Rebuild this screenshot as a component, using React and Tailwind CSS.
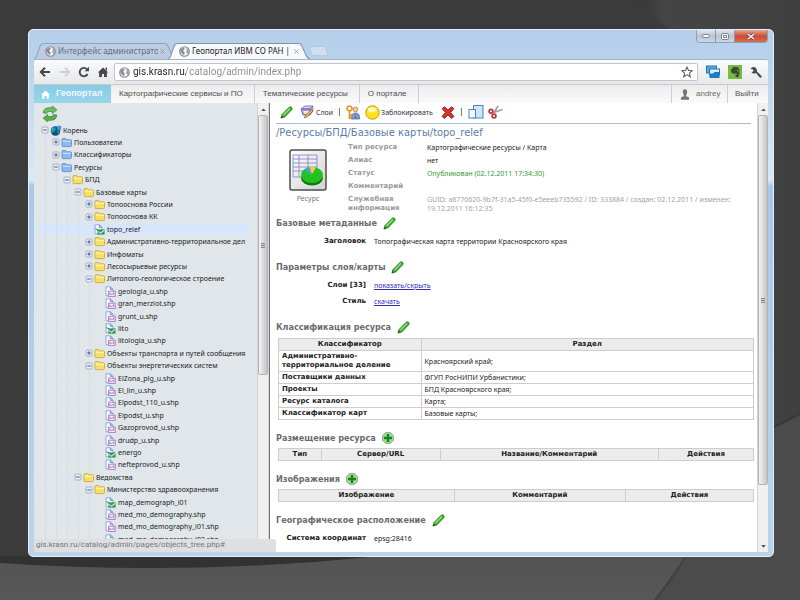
import React from "react";

const tree = [
  [0, "Корень", "globe", "-"],
  [1, "Пользователи", "blue", "+"],
  [1, "Классификаторы", "blue", "+"],
  [1, "Ресурсы", "blue", "-"],
  [2, "БПД", "yellow", "-"],
  [3, "Базовые карты", "yellow", "-"],
  [4, "Топооснова России", "yellow", "+"],
  [4, "Топооснова КК", "yellow", "+"],
  [4, "topo_relef", "map", ""],
  [4, "Административно-территориальное дел", "yellow", "+"],
  [4, "Инфоматы", "yellow", "+"],
  [4, "Лесосырьевые ресурсы", "yellow", "+"],
  [4, "Литолого-геологическое строение", "yellow", "-"],
  [5, "geologia_u.shp", "shp", ""],
  [5, "gran_merzlot.shp", "shp", ""],
  [5, "grunt_u.shp", "shp", ""],
  [5, "lito", "map", ""],
  [5, "litologia_u.shp", "shp", ""],
  [4, "Объекты транспорта и путей сообщения", "yellow", "+"],
  [4, "Объекты энергетических систем", "yellow", "-"],
  [5, "ElZona_plg_u.shp", "shp", ""],
  [5, "El_lin_u.shp", "shp", ""],
  [5, "Elpodst_110_u.shp", "shp", ""],
  [5, "Elpodst_u.shp", "shp", ""],
  [5, "Gazoprovod_u.shp", "shp", ""],
  [5, "drudp_u.shp", "shp", ""],
  [5, "energo", "map", ""],
  [5, "nefteprovod_u.shp", "shp", ""],
  [3, "Ведомства", "yellow", "-"],
  [4, "Министерство здравоохранения", "yellow", "-"],
  [5, "map_demograph_i01", "map", ""],
  [5, "med_mo_demography.shp", "shp", ""],
  [5, "med_mo_demography_i01.shp", "shp", ""],
  [5, "med_mo_demography_i02.shp", "shp", ""],
];

function Backdrop() {
  return (
    <svg className="absolute inset-0 h-full w-full" viewBox="0 0 800 600" preserveAspectRatio="none" aria-hidden="true">
      <defs>
        <linearGradient id="floor" x1="0" y1="0" x2="0" y2="1">
          <stop offset="0" stopColor="#474747" />
          <stop offset="1" stopColor="#575757" />
        </linearGradient>
        <linearGradient id="side" x1="0" y1="0" x2="1" y2="0">
          <stop offset="0" stopColor="#363636" />
          <stop offset="0.16" stopColor="#444444" />
          <stop offset="1" stopColor="#404040" />
        </linearGradient>
      </defs>
      <rect width="800" height="600" fill="#3b3b3b" />
      <path d="M638 0H800V440H774V60Q690 60 638 0Z" fill="url(#side)" />
      <path d="M0 562Q190 575 380 556L774 428L800 414V600H0Z" fill="url(#floor)" />
      <path d="M0 556H380Q190 576 0 563Z" fill="#323232" />
      <path d="M774 428L800 414V600H655Q676 573 686 556H774Z" fill="#4b4b4b" />
      <path d="M655 600Q676 573 686 556" stroke="#404040" strokeWidth="2" fill="none" />
      <path d="M774 427L800 414" stroke="#383838" strokeWidth="2" />
    </svg>
  );
}

function Pencil() {
  return (
    <svg viewBox="0 0 14 14" className="h-[13px] w-[13px]" aria-hidden="true">
      <path d="M1 13L2.200 9.200L9.800 1.400Q11.200 .4 12.600 1.500Q13.600 2.800 12.600 4.100L5 11.900Z" fill="#3fae2e" stroke="#1f7a1b" strokeWidth=".9" />
      <path d="M3.600 9.800L10.800 2.600" stroke="#a5e58c" strokeWidth="1.400" />
      <path d="M1 13L1.900 10.600L3.400 12.100Z" fill="#2c4a20" />
    </svg>
  );
}

function Plus() {
  return (
    <svg viewBox="0 0 12 12" className="h-3 w-3" aria-hidden="true">
      <path d="M3.600 .6H8.400L11.400 3.600V8.400L8.400 11.400H3.600L.6 8.400V3.600Z" fill="#a9d3a6" stroke="#6fa86c" strokeWidth=".8" />
      <path d="M6 2V10M2 6H10" stroke="#0c8a14" strokeWidth="2.400" />
    </svg>
  );
}

function Globe() {
  return (
    <svg viewBox="0 0 12 12" className="h-[11px] w-[11px] shrink-0" aria-hidden="true">
      <circle cx="6" cy="6" r="5.200" fill="#f4f5f6" stroke="#84888e" strokeWidth="1.300" />
      <path d="M1.600 3.600L4.600 1.800L6.400 3L4.400 5L6.200 7.200L5.400 10L3 8L1.200 5.400Z" fill="#8a8e94" />
      <path d="M8 1.800L10.200 3.800L10.600 6.600L9 8.600L7.800 6.200L8.600 4.400Z" fill="#9a9ea3" />
    </svg>
  );
}

function TreeIcon({ kind }) {
  if (kind === "globe")
    return (
      <svg viewBox="0 0 12 11" className="h-[11px] w-3" aria-hidden="true">
        <circle cx="5.500" cy="6" r="4.800" fill="#0d4f9a" />
        <path d="M2 3Q5 1.500 5.500 3.500T3.500 7T2 8.500Q0 5.500 2 3Z" fill="#27a39a" />
        <path d="M6.500 5.500L9.500 5Q10 8 7.600 9.600Z" fill="#1d8f6a" />
        <circle cx="9.200" cy="2.800" r="2.300" fill="#3b9ede" />
      </svg>
    );
  if (kind === "blue" || kind === "yellow") {
    const blue = kind === "blue";
    return (
      <svg viewBox="0 0 12 11" className="h-[11px] w-3" aria-hidden="true">
        <path
          d="M1 2.500Q1 1.500 2 1.500H4.600L5.800 2.800H9.500Q10.500 2.800 10.500 3.800V8.600Q10.500 9.600 9.500 9.600H2Q1 9.600 1 8.600Z"
          fill={blue ? "#8db9ee" : "#f8df62"}
          stroke={blue ? "#5f8fd0" : "#cfaa3c"}
          strokeWidth=".9"
        />
        <path d="M1.800 4.400H9.800" stroke={blue ? "#c6defa" : "#fff4ac"} strokeWidth="1.400" />
      </svg>
    );
  }
  const map = kind === "map";
  return (
    <svg viewBox="0 0 12 11" className="h-[11px] w-3" aria-hidden="true">
      <path d="M1 .8H5.500L8 3.200V9.800H1Z" fill="#f4f8ff" stroke="#7d9ccb" strokeWidth=".8" />
      <path d="M5.300 .8V3.500H8" fill="#8fb0df" stroke="#6c8fc4" strokeWidth=".7" />
      {map ? (
        <g>
          <rect x="3.400" y="5.400" width="7.200" height="5.200" fill="#2e9a4e" />
          <path d="M3.600 6L6 8.500L10.400 5.400V7L6.500 10L3.600 8Z" fill="#b4e4ca" />
          <path d="M1.500 4.500L4.500 6.500" stroke="#335a8a" strokeWidth="1" />
        </g>
      ) : (
        <g>
          <rect x="3.600" y="5.200" width="6.600" height="5.200" fill="#f6ecfa" stroke="#a878be" strokeWidth=".9" />
          <path d="M4.800 9V7L6.800 8.800L8.800 6.600V9" stroke="#a878be" strokeWidth=".9" fill="none" />
        </g>
      )}
    </svg>
  );
}

function Toggle({ state }) {
  if (!state) return <span className="w-[9px] shrink-0" />;
  return (
    <button className="flex w-[9px] shrink-0 items-center" aria-label={state === "+" ? "Развернуть" : "Свернуть"}>
      <svg viewBox="0 0 8 8" className="h-2 w-2" aria-hidden="true">
        <rect x="1" y="1" width="6" height="6" rx="1" fill="#eef2f7" stroke="#98a9c1" strokeWidth=".9" />
        <path d={state === "+" ? "M2.200 4H5.800M4 2.200V5.800" : "M2.200 4H5.800"} stroke="#3f5884" strokeWidth="1" />
      </svg>
    </button>
  );
}

function Scrollbar({ thumb, bottomArrow }) {
  return (
    <div className="flex w-[11px] shrink-0 flex-col border-l border-[#d4d4d4] bg-[#f0f0f0]" aria-hidden="true">
      <div className="flex h-3 shrink-0 items-center justify-center">
        <svg viewBox="0 0 6 4" className="h-[3px] w-[5px]"><path d="M0 4L3 .5L6 4Z" fill="#505050" /></svg>
      </div>
      <div className={"flex items-center justify-center rounded-xs border border-[#b4b4b8] bg-linear-to-r from-[#f4f4f5] to-[#c4c4c8] " + thumb}>
        <div className="h-[5px] w-1 border-y border-[#888] bg-[linear-gradient(#ccc_1px,#888_1px,#888_2px,#ccc_2px)]" />
      </div>
      <div className="flex-1" />
      {bottomArrow && (
        <div className="flex h-3 shrink-0 items-center justify-center">
          <svg viewBox="0 0 6 4" className="h-[3px] w-[5px]"><path d="M0 0L3 3.500L6 0Z" fill="#505050" /></svg>
        </div>
      )}
    </div>
  );
}

function WindowButtons() {
  return (
    <div className="flex h-[13px] overflow-hidden rounded-b border border-t-0 border-[#8fa0b6]">
      <button aria-label="Свернуть" className="flex w-[19px] items-center justify-center border-r border-[#8699b2] bg-linear-to-b from-[#dfe6ef] via-[#b9c5d3] to-[#cdd8e4]">
        <span className="h-1 w-2 rounded-xs border border-[#7c8693] bg-white" />
      </button>
      <button aria-label="Развернуть" className="flex w-[19px] items-center justify-center border-r border-[#8699b2] bg-linear-to-b from-[#dfe6ef] via-[#b9c5d3] to-[#cdd8e4]">
        <span className="flex h-[7px] w-2 items-center justify-center rounded-xs border border-[#7c8693] bg-white"><span className="h-[3px] w-1 border border-[#7c8693]" /></span>
      </button>
      <button aria-label="Закрыть" className="flex w-8 items-center justify-center bg-linear-to-b from-[#e5a797] via-[#cb4b33] to-[#d9694e]">
        <svg viewBox="0 0 8 7" className="h-[7px] w-2"><path d="M1 1L7 6M7 1L1 6" stroke="#7a4a4a" strokeWidth="3" /><path d="M1 1L7 6M7 1L1 6" stroke="#f4f4f4" strokeWidth="1.600" /></svg>
      </button>
    </div>
  );
}

function Tab({ active, title }) {
  return (
    <div className={"relative flex h-4 w-[142px] items-center pl-[11px] " + (active ? "z-10 -ml-2" : "")}>
      <svg viewBox="0 0 140 16" preserveAspectRatio="none" className="absolute inset-0 h-full w-full" aria-hidden="true">
        <path
          d="M0 16Q2 15 3 12L6 3Q7 .5 10 .5H128Q131 .5 132 3L136 12Q137 15 140 16"
          fill={active ? "#f8f9fb" : "#bccde2"}
          stroke={active ? "#7f93ad" : "#8fa3bd"}
          strokeWidth="1"
        />
      </svg>
      <button className="relative flex min-w-0 flex-1 items-center gap-0.5">
        <Globe />
        <span className={"flex-1 overflow-hidden text-left text-[8px] leading-3 whitespace-nowrap " + (active ? "text-[#222]" : "text-[#66717f]")}>{title}</span>
      </button>
      <button aria-label="Закрыть вкладку" className="relative mr-2.5 flex w-2 justify-center">
        <svg viewBox="0 0 6 6" className="h-[5px] w-[5px]"><path d="M.5 .5L5.500 5.500M5.500 .5L.5 5.500" stroke="#9299a3" strokeWidth="1.100" /></svg>
      </button>
    </div>
  );
}

function BrowserBar() {
  return (
    <div className="flex h-[25px] shrink-0 items-center rounded-t-xs border-t border-[#a4b4c8] bg-linear-to-b from-[#fbfbfc] to-[#e6e7e9] pr-1.5 pl-[5px]">
      <button aria-label="Назад" className="w-5"><svg viewBox="0 0 12 12" className="h-3 w-3"><path d="M11 6H2M6 1.800L1.800 6L6 10.200" stroke="#484848" strokeWidth="2" fill="none" /></svg></button>
      <button aria-label="Вперёд" className="w-[19px]"><svg viewBox="0 0 12 12" className="h-3 w-3"><path d="M1 6H10M6 1.800L10.200 6L6 10.200" stroke="#cfcfcf" strokeWidth="1.800" fill="none" /></svg></button>
      <button aria-label="Обновить" className="w-[19px]"><svg viewBox="0 0 12 12" className="h-3 w-3"><path d="M9.600 8A4.200 4.200 0 1 1 9 3.200" stroke="#484848" strokeWidth="1.900" fill="none" /><path d="M6.500 5.200H11V.8Z" fill="#484848" /></svg></button>
      <button aria-label="Домой" className="w-[17px]"><svg viewBox="0 0 12 12" className="h-3 w-3"><path d="M.8 6.400L6 1.400L11.200 6.400H9.900V11H7V8H5V11H2.100V6.400Z" fill="#484848" /><path d="M8.600 1.400H10V4.500H8.600Z" fill="#484848" /></svg></button>
      <div className="flex h-[18px] min-w-0 flex-1 items-center gap-[3px] rounded-xs border border-[#c2c6cc] bg-white px-1">
        <Globe />
        <input
          aria-label="Адрес"
          defaultValue="gis.krasn.ru/catalog/admin/index.php"
          className="min-w-0 flex-1 bg-[linear-gradient(90deg,#222_53px,#8b8b8b_53px)] bg-clip-text font-['Roboto',sans-serif] text-[10px] leading-4 text-transparent outline-none"
        />
        <button aria-label="Закладка"><svg viewBox="0 0 12 12" className="h-3 w-3"><path d="M6 1L7.500 4.400L11.200 4.700L8.400 7.100L9.300 10.800L6 8.800L2.700 10.800L3.600 7.100L.8 4.700L4.500 4.400Z" fill="#fff" stroke="#5c6370" strokeWidth="1.100" /></svg></button>
      </div>
      <button aria-label="Вкладки" className="ml-2 w-[22px]">
        <svg viewBox="0 0 14 14" className="h-[14px] w-[14px]"><rect x=".5" y="1" width="10" height="7" fill="#5ba6da" stroke="#2577b4" /><rect x="3.500" y="4" width="10" height="6" fill="#d8ecf8" stroke="#2577b4" /><path d="M3.500 13V8.500H7L8.500 7H13.500V13Z" fill="#1f7dbd" /></svg>
      </button>
      <button aria-label="Заметки" className="w-[22px]">
        <svg viewBox="0 0 14 14" className="h-[14px] w-[14px]"><rect width="14" height="14" fill="#75bb3e" /><path d="M3 4.500L5.500 2H9Q11.500 2.500 11.500 6Q11.500 12 9.500 12.200Q7 12.400 7.200 10.400Q7.800 9.200 9 10Q9.200 8.600 7.400 8.600Q5.600 9.400 4 8Q2.600 6.800 3 4.500Z" fill="#3d4a38" /><path d="M9 5.400Q10 5 10.200 6.400" stroke="#a7d486" strokeWidth=".9" fill="none" /></svg>
      </button>
      <button aria-label="Настройки">
        <svg viewBox="0 0 12 12" className="h-3 w-3"><path d="M4.500 1Q1.500 .6 .6 3L3 3.400L3.600 5.200L1.400 6.200Q3.600 8.200 6 6.900L9.400 11.200Q10.800 12.200 11.600 11Q12 10 10.800 9.200L6.900 5.600Q7.500 2.400 4.500 1Z" fill="#4a4a4a" /></svg>
      </button>
    </div>
  );
}

function NavBar() {
  const link = "flex items-center border-r border-[#cfcfd1] pr-[11px] pl-2 text-[#4c4c4c]";
  return (
    <nav className="flex h-[19px] shrink-0 border-t border-[#c8cacd] bg-linear-to-b from-[#ececee] to-[#fafafa] font-['Liberation_Sans',sans-serif] text-[8px]">
      <a href="#home" className="flex w-[77px] items-center gap-1.5 bg-linear-to-b from-[#86cbe4] to-[#9ad6ea] pl-[7px] text-[9px] font-bold text-[#effaff]">
        <svg viewBox="0 0 10 10" className="h-[9px] w-[9px]" aria-hidden="true"><path d="M0 5.400L5 .5L10 5.400H8.700V9.600H6.200V6.600H3.800V9.600H1.300V5.400Z" fill="#fff" /></svg>
        Геопортал
      </a>
      <a href="#services" className={link}>Картографические сервисы и ПО</a>
      <a href="#thematic" className={link}>Тематические ресурсы</a>
      <a href="#about" className={link}>О портале</a>
      <span className="flex-1" />
      <a href="#user" className="flex w-[57px] items-center gap-1.5 border-x border-[#cfcfd1] pl-2 text-[#6a6a6a]">
        <svg viewBox="0 0 10 11" className="h-[11px] w-2.5" aria-hidden="true"><path d="M5 .3Q7.400 .3 7.200 3Q7 5.200 6.200 6V7.200L9 8.200V10.700H1V8.200L3.800 7.200V6Q3 5.200 2.800 3Q2.600 .3 5 .3Z" fill="#777" /></svg>
        andrey
      </a>
      <a href="#exit" className="flex w-10 items-center pl-[7px] text-[#555]">Выйти</a>
    </nav>
  );
}

function Sidebar() {
  return (
    <aside className="relative flex w-[223px] shrink-0 flex-col overflow-hidden bg-[#e0e6ea] font-['Noto_Sans',sans-serif] text-[7px] text-[#222]">
      <button aria-label="Обновить дерево" className="ml-2 h-[21px] w-4 shrink-0">
        <svg viewBox="0 0 14 14" className="h-4 w-4">
          <path d="M1 6Q1.500 1.500 6.500 1.500H9V0L13 3.400L9 6.600V4.800H6.500Q4.500 4.800 4 6.500Z" fill="#6fbf62" stroke="#3d8c3a" strokeWidth=".7" />
          <path d="M13 8Q12.500 12.500 7.500 12.500H5V14L1 10.600L5 7.400V9.200H7.500Q9.500 9.200 10 7.500Z" fill="#58ad50" stroke="#3d8c3a" strokeWidth=".7" />
        </svg>
      </button>
      <ul className="mr-[7px] ml-1 shrink-0">
        {tree.map(([depth, name, kind, state], i) => (
          <li
            key={i}
            className={"flex h-3 items-center pl-[3px] nth-[5n]:h-[13px] nth-[5n+3]:h-[13px] " + (name === "topo_relef" ? "bg-[#d8e6fb]" : "")}
          >
            {Array.from({ length: depth }, (_, d) => (
              <span key={d} className="flex w-[11px] shrink-0 self-stretch pl-1"><span className="border-l border-dotted border-[#cfd6dc]" /></span>
            ))}
            <Toggle state={state} />
            <span className="w-3 shrink-0"><TreeIcon kind={kind} /></span>
            <a href="#node" className="pl-px leading-[11px] whitespace-nowrap">{name}</a>
          </li>
        ))}
      </ul>
    </aside>
  );
}

function Toolbar() {
  return (
    <div className="mr-1.5 flex h-[21px] items-center border-b border-[#a9bccf] pr-1 pb-0.5 pl-1 text-[7px] text-[#333]">
      <button aria-label="Править" className="mr-[7px]"><Pencil /></button>
      <button className="flex items-center gap-0.5">
        <svg viewBox="0 0 14 14" className="h-[14px] w-[14px]" aria-hidden="true">
          <path d="M1 4L5 1H13L10 4Z" fill="#d9cdf2" stroke="#6b5aa8" strokeWidth=".8" />
          <path d="M10 4L13 1V6L10 10Z" fill="#b7a8e0" stroke="#6b5aa8" strokeWidth=".6" />
          <path d="M1 4H10V10H3Z" fill="#a99ad8" stroke="#6b5aa8" strokeWidth=".8" />
          <path d="M3 6H9V9H5Z" fill="#efe8fb" />
          <path d="M4.500 13L5.500 10L11.500 4.500L13 6L7 11.800Z" fill="#f0b23e" stroke="#8a5c1c" strokeWidth=".7" />
        </svg>
        Слои
      </button>
      <span className="mx-1.5 h-2 w-px bg-[#6a8f6a]" />
      <button aria-label="Права доступа" className="mr-[5px]">
        <svg viewBox="0 0 14 15" className="h-[15px] w-[14px]">
          <circle cx="9.500" cy="4.500" r="2.400" fill="#f0c9a0" stroke="#9a6a3a" strokeWidth=".6" />
          <path d="M5 14Q5 8 9.500 8T13.500 14Z" fill="#6fa0dc" stroke="#335f9a" strokeWidth=".7" />
          <path d="M9.500 8.500L10.500 13H8.500Z" fill="#d44" />
          <circle cx="3.500" cy="3.500" r="2.500" fill="none" stroke="#dd9a1c" strokeWidth="1.700" />
          <path d="M3.500 6V14M3.500 10H6M3.500 12.800H6" stroke="#dd9a1c" strokeWidth="1.700" />
        </svg>
      </button>
      <button className="flex items-center gap-px">
        <svg viewBox="0 0 14 14" className="h-[15px] w-[15px]" aria-hidden="true">
          <circle cx="7" cy="7" r="6.300" fill="#ffe21c" stroke="#c09a10" strokeWidth=".9" />
          <ellipse cx="6.500" cy="4.400" rx="3.800" ry="2.400" fill="#fff9b8" />
        </svg>
        Заблокировать
      </button>
      <button aria-label="Удалить" className="ml-2">
        <svg viewBox="0 0 14 13" className="h-[13px] w-[14px]"><path d="M1 2.600L3.600 .8L7 4L10.400 .8L13 2.600L9.600 6.400L13 10.400L10.400 12.400L7 9L3.600 12.400L1 10.400L4.400 6.400Z" fill="#d3332c" stroke="#8e1a18" strokeWidth=".8" /></svg>
      </button>
      <span className="mx-1.5 h-2 w-px bg-[#6a8f6a]" />
      <button aria-label="Копировать" className="mr-1">
        <svg viewBox="0 0 16 14" className="h-[14px] w-4"><rect x="5.500" y=".5" width="9.500" height="12.500" fill="#cfe6fa" stroke="#4a86c0" /><rect x="1" y="4.500" width="6.500" height="8.500" fill="#f4faff" stroke="#4a86c0" /></svg>
      </button>
      <button aria-label="Вырезать">
        <svg viewBox="0 0 15 14" className="h-[14px] w-[15px]"><path d="M6 8L10 .8M6 7.500L14.500 4.600" stroke="#9a9da3" strokeWidth="1.600" /><circle cx="3" cy="6.200" r="1.900" fill="none" stroke="#c0343a" strokeWidth="1.700" /><circle cx="6" cy="11" r="1.900" fill="none" stroke="#c0343a" strokeWidth="1.700" /></svg>
      </button>
    </div>
  );
}

function Section({ title, icon, label, children }) {
  return (
    <section className="mb-2.5">
      <div className="mb-0.5 flex h-4 items-center gap-1.5">
        <h2 className="font-['DejaVu_Sans_Condensed',sans-serif] text-[9px] font-bold text-[#6b6b6b]">{title}</h2>
        <button aria-label={label}>{icon}</button>
      </div>
      {children}
    </section>
  );
}

const strong = "font-['DejaVu_Sans',sans-serif] font-bold";

function Row({ label, children }) {
  return (
    <div className="grid h-4 grid-cols-[90px_1fr] items-center gap-2">
      <dt className={strong + " text-right text-[#222]"}>{label}</dt>
      <dd>{children}</dd>
    </div>
  );
}

const cell = "border border-[#cdcdcd] px-[3px] py-px";

function HeadTable({ columns }) {
  return (
    <table className="mt-0.5 ml-0.5 w-[calc(100%-5px)] table-fixed border-collapse">
      <thead>
        <tr className="bg-[#ececec]">
          {columns.map(([name, width]) => (
            <th key={name} scope="col" className={cell + " " + strong + " " + width}>{name}</th>
          ))}
        </tr>
      </thead>
    </table>
  );
}

const classes = [
  ["Административно-территориальное деление", "Красноярский край;"],
  ["Поставщики данных", "ФГУП РосНИПИ Урбанистики;"],
  ["Проекты", "БПД Красноярского края;"],
  ["Ресурс каталога", "Карта;"],
  ["Классификатор карт", "Базовые карты;"],
];

function Content() {
  const dt = strong + " text-[#9a9a9a]";
  return (
    <main className="min-w-0 flex-1 overflow-hidden bg-white pl-[6px] font-['Noto_Sans',sans-serif] text-[7px] leading-[9px] text-[#222]">
      <Toolbar />
      <h1 className="h-[18px] font-['DejaVu_Sans_Condensed',sans-serif] text-[11px] leading-[17px] text-[#5a7da8]">/Ресурсы/БПД/Базовые карты/topo_relef</h1>
      <div className="flex pt-px pr-1 pb-0.5">
        <figure className="flex w-[72px] shrink-0 flex-col items-center pt-1.5 pr-2">
          <svg viewBox="0 0 38 42" className="h-[42px] w-[38px]" aria-hidden="true">
            <defs>
              <linearGradient id="sheet" x1="0" y1="0" x2="1" y2="1"><stop offset="0" stopColor="#fff" /><stop offset="1" stopColor="#d2d2d2" /></linearGradient>
            </defs>
            <rect x="1" y="1" width="36" height="40" rx="2" fill="url(#sheet)" stroke="#4e4e4e" strokeWidth="1.500" />
            <path d="M4 6H28V28H4ZM4 10H28M4 14H28M4 18H28M4 22H28M10 6V28M19 6V28" fill="none" stroke="#8d88cc" strokeWidth=".9" />
            <ellipse cx="23" cy="29" rx="11" ry="7.500" fill="#0a7a12" />
            <ellipse cx="23" cy="26" rx="11" ry="8" fill="#22c51f" />
            <path d="M23 26L15 20.500Q18 18.400 21 18.200Z" fill="#4f9fe0" />
            <path d="M23 25L20.500 18.200Q24 17.600 27 18.600Z" fill="#ffc93a" />
          </svg>
          <figcaption className="pt-[3px] text-[#777]">Ресурс</figcaption>
        </figure>
        <dl className="grid flex-1 grid-cols-[71px_1fr] gap-x-2 gap-y-1">
          <dt className={dt}>Тип ресурса</dt><dd>Картографические ресурсы / Карта</dd>
          <dt className={dt}>Алиас</dt><dd>нет</dd>
          <dt className={dt}>Статус</dt><dd className="text-[#2f9a35]">Опубликован (02.12.2011 17:34:30)</dd>
          <dt className={dt}>Комментарий</dt><dd />
          <dt className={dt}>Служебная информация</dt>
          <dd className="text-[#a2a2a2]">GUID: a8770620-9b7f-31a5-45f0-e5eeeb735592 / ID: 333884 / создан: 02.12.2011 / изменен: 19.12.2011 16:12:35</dd>
        </dl>
      </div>
      <Section title="Базовые метаданные" label="Править метаданные" icon={<Pencil />}>
        <dl><Row label="Заголовок">Топографическая карта территории Красноярского края</Row></dl>
      </Section>
      <Section title="Параметры слоя/карты" label="Править параметры" icon={<Pencil />}>
        <dl>
          <Row label="Слои [33]"><a href="#layers" className="text-[#2b2bc0] underline">показать/скрыть</a></Row>
          <Row label="Стиль"><a href="#style" className="text-[#2b2bc0] underline">скачать</a></Row>
        </dl>
      </Section>
      <Section title="Классификация ресурса" label="Править классификацию" icon={<Pencil />}>
        <table className="mt-[3px] ml-0.5 w-[calc(100%-5px)] table-fixed border-collapse">
          <thead>
            <tr className="bg-[#ececec]">
              <th scope="col" className={cell + " " + strong + " w-[30%]"}>Классификатор</th>
              <th scope="col" className={cell + " " + strong}>Раздел</th>
            </tr>
          </thead>
          <tbody>
            {classes.map(([name, value]) => (
              <tr key={name}>
                <th scope="row" className={cell + " " + strong + " text-left"}>{name}</th>
                <td className={cell}>{value}</td>
              </tr>
            ))}
          </tbody>
        </table>
      </Section>
      <Section title="Размещение ресурса" label="Добавить размещение" icon={<Plus />}>
        <HeadTable columns={[["Тип", "w-[9%]"], ["Сервер/URL", "w-[25%]"], ["Название/Комментарий", "w-[46%]"], ["Действия", "w-[20%]"]]} />
      </Section>
      <Section title="Изображения" label="Добавить изображение" icon={<Plus />}>
        <HeadTable columns={[["Изображение", "w-[37%]"], ["Комментарий", "w-[36%]"], ["Действия", "w-[27%]"]]} />
      </Section>
      <Section title="Географическое расположение" label="Править расположение" icon={<Pencil />}>
        <dl>
          <Row label="Система координат">epsg:28416</Row>
          <Row label="">POLYGON((1504245 770428 545875 882644, 1541045 772468 542671 6, 4036775 642344</Row>
        </dl>
      </Section>
    </main>
  );
}

export default function App() {
  return (
    <div className="relative flex h-screen min-h-[480px] overflow-hidden bg-[#3b3b3b] pt-[29px] pr-[26px] pb-[43px] pl-7 font-['Noto_Sans',sans-serif]">
      <Backdrop />
      <div className="relative flex min-w-0 flex-1 flex-col overflow-hidden rounded-[5px] border border-[#e3effb] bg-[linear-gradient(#b5cfeb,#b9d2ec_30px,#dbe8f5_150px,#a9c8e8_156px,#bcd3ea)] px-[5px] pb-1">
        <header className="flex h-[29px] shrink-0 items-end justify-between">
          <div className="flex items-end">
            <Tab title="Интерфейс администрато" />
            <Tab active title="Геопортал ИВМ СО РАН |" />
            <button aria-label="Новая вкладка" className="mb-[3px] h-2.5 w-[17px] -skew-x-[-20deg] rounded-xs border border-[#b4c8df] bg-[#cfdff0]" />
          </div>
          <div className="self-start"><WindowButtons /></div>
        </header>
        <BrowserBar />
        <NavBar />
        <div className="relative flex min-h-0 flex-1 overflow-hidden">
          <Sidebar />
          <Scrollbar thumb="h-[260px]" />
          <div className="w-0.5 shrink-0 border-r border-[#6f6f6f] bg-[#d8d8d8]" />
          <Content />
          <Scrollbar thumb="h-[370px]" bottomArrow />
          <div className="absolute bottom-0 left-0 h-[13px] w-[242px] rounded-tr-xs bg-[#dedfe0] pl-0.5 font-['Roboto',sans-serif] text-[8px] leading-3 text-[#777]">gis.krasn.ru/catalog/admin/pages/objects_tree.php#</div>
        </div>
      </div>
    </div>
  );
}
